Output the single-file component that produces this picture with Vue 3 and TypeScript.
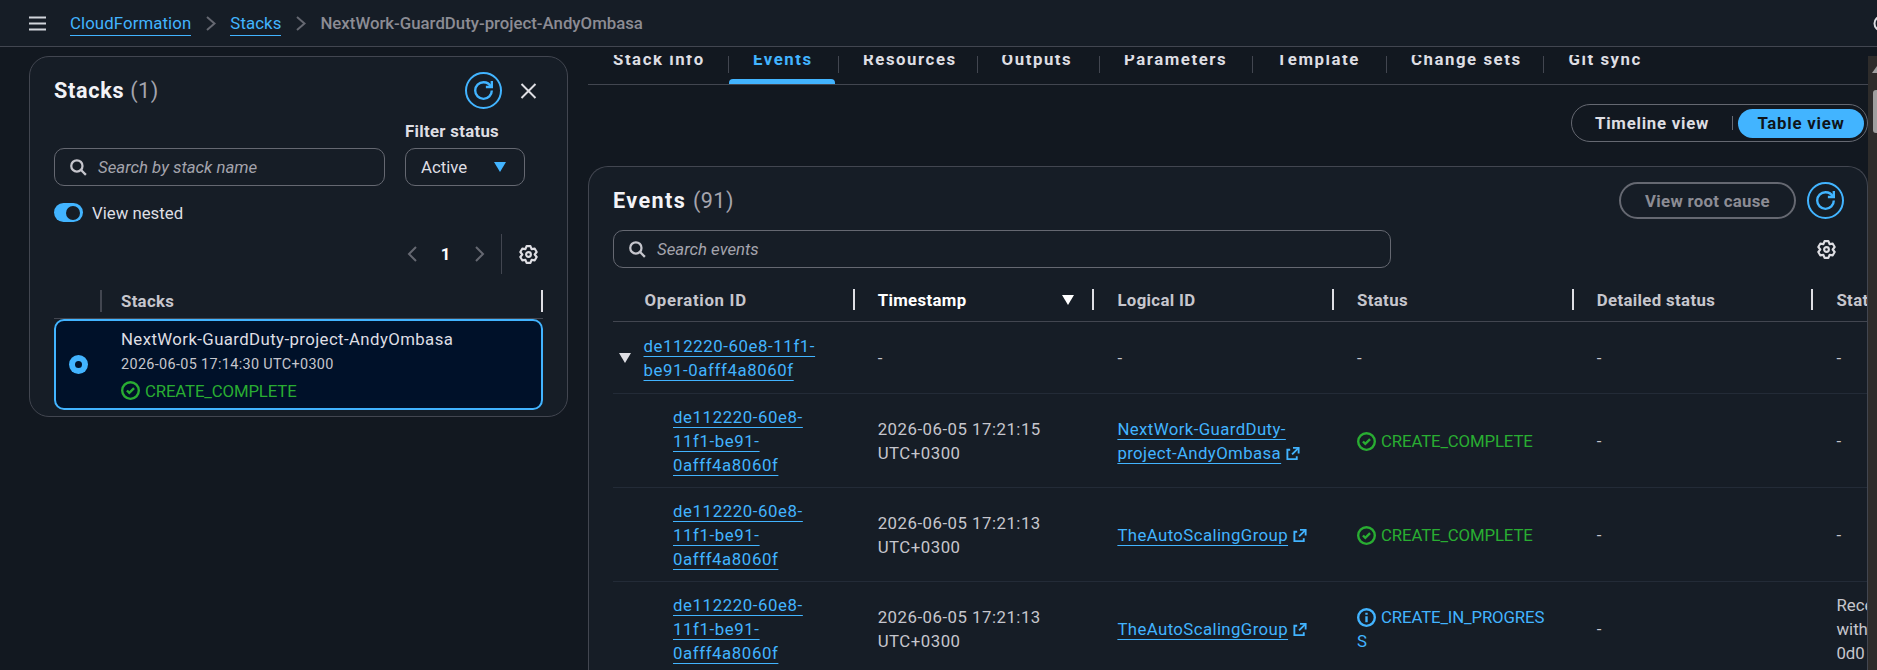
<template>
  <div class="page">
    <!-- Top bar -->
    <header class="topbar">
      <svg class="menu-icon" width="17" height="15" viewBox="0 0 17 15" fill="none" stroke="currentColor" stroke-width="2">
        <path d="M0 1.5h17M0 7.5h17M0 13.5h17" />
      </svg>
      <nav class="crumbs">
        <a class="crumb-link">CloudFormation</a>
        <svg class="crumb-sep" width="10" height="15" viewBox="0 0 10 15" fill="none" stroke="currentColor" stroke-width="2">
          <path d="M1 1l7.5 6.5L1 14" />
        </svg>
        <a class="crumb-link">Stacks</a>
        <svg class="crumb-sep" width="10" height="15" viewBox="0 0 10 15" fill="none" stroke="currentColor" stroke-width="2">
          <path d="M1 1l7.5 6.5L1 14" />
        </svg>
        <span class="crumb-current">NextWork-GuardDuty-project-AndyOmbasa</span>
      </nav>
      <svg class="corner-icon" width="17" height="17" viewBox="0 0 17 17" fill="none" stroke="currentColor" stroke-width="2">
        <circle cx="8.5" cy="8.5" r="7" />
      </svg>
    </header>

    <div class="main">
      <!-- Stacks side panel -->
      <aside class="side">
        <section class="card stacks-card">
          <div class="stacks-head">
            <h2 class="card-title">Stacks <span class="count">(1)</span></h2>
            <button class="round-btn">
              <svg width="19" height="19" viewBox="0 0 16 16" fill="none" stroke="currentColor" stroke-width="2">
                <path d="M10 5h5V0" />
                <path d="M15 8a6.99 6.99 0 0 1-7 7 6.99 6.99 0 0 1-7-7c0-3.87 3.13-7 7-7 2.79 0 5.2 1.63 6.33 4" />
              </svg>
            </button>
            <svg class="close-icon" width="17" height="16" viewBox="0 0 17 16" fill="none" stroke="currentColor" stroke-width="2">
              <path d="M1.5 1l14 14M15.5 1l-14 14" />
            </svg>
          </div>

          <div class="filters">
            <div class="search stack-search">
              <svg class="search-icon" width="18" height="18" viewBox="0 0 16 16" fill="none" stroke="currentColor" stroke-width="2">
                <circle cx="7" cy="7" r="5" />
                <path d="m15 15-4.5-4.5" />
              </svg>
              <span class="placeholder">Search by stack name</span>
            </div>
            <div class="filter-field">
              <label class="filter-label">Filter status</label>
              <div class="select">
                <span>Active</span>
                <span class="select-caret"></span>
              </div>
            </div>
          </div>

          <div class="nested">
            <span class="toggle"><span class="toggle-knob"></span></span>
            <span>View nested</span>
          </div>

          <div class="pager">
            <svg class="pager-arrow" width="10" height="16" viewBox="0 0 10 16" fill="none" stroke="currentColor" stroke-width="2">
              <path d="M9 1L2 8l7 7" />
            </svg>
            <span class="pager-num">1</span>
            <svg class="pager-arrow" width="10" height="16" viewBox="0 0 10 16" fill="none" stroke="currentColor" stroke-width="2">
              <path d="M1 1l7 7-7 7" />
            </svg>
            <span class="pager-divider"></span>
            <svg class="gear" width="19" height="19" viewBox="0 0 16 16" fill="none" stroke="currentColor" stroke-width="1.8" stroke-linejoin="round">
              <polygon :points="gearPoints" />
              <circle cx="8" cy="8" r="2" />
            </svg>
          </div>

          <div class="stacks-table-head">
            <span class="stacks-th">Stacks</span>
          </div>

          <div class="stack-row">
            <span class="radio"><span class="radio-dot"></span></span>
            <div class="stack-info">
              <div class="stack-name">NextWork-GuardDuty-project-AndyOmbasa</div>
              <div class="stack-date">2026-06-05 17:14:30 UTC+0300</div>
              <div class="stack-status">
                <svg class="status-icon" width="19" height="19" viewBox="0 0 16 16" fill="none" stroke="currentColor" stroke-width="2">
                  <circle cx="8" cy="8" r="7" />
                  <path d="m5 8 2 2 4-4" />
                </svg>
                CREATE_COMPLETE
              </div>
            </div>
          </div>
        </section>
      </aside>

      <!-- Stack detail -->
      <main class="content">
        <div class="tabs-clip">
          <div class="tabs">
            <div
              v-for="tab in tabs"
              :key="tab.label"
              class="tab"
              :class="{ active: tab.label === 'Events' }"
              :style="{ width: tab.width + 'px' }"
            >{{ tab.label }}</div>
          </div>
        </div>

        <div class="view-row">
          <div class="segmented">
            <span class="seg-item">Timeline view</span>
            <span class="seg-divider"></span>
            <span class="seg-item seg-active">Table view</span>
          </div>
        </div>

        <section class="card events-card">
          <div class="events-head">
            <h2 class="card-title events-title">Events <span class="count">(91)</span></h2>
            <button class="pill-btn">View root cause</button>
            <button class="round-btn">
              <svg width="19" height="19" viewBox="0 0 16 16" fill="none" stroke="currentColor" stroke-width="2">
                <path d="M10 5h5V0" />
                <path d="M15 8a6.99 6.99 0 0 1-7 7 6.99 6.99 0 0 1-7-7c0-3.87 3.13-7 7-7 2.79 0 5.2 1.63 6.33 4" />
              </svg>
            </button>
          </div>

          <div class="events-tools">
            <div class="search events-search">
              <svg class="search-icon" width="18" height="18" viewBox="0 0 16 16" fill="none" stroke="currentColor" stroke-width="2">
                <circle cx="7" cy="7" r="5" />
                <path d="m15 15-4.5-4.5" />
              </svg>
              <span class="placeholder">Search events</span>
            </div>
            <svg class="gear" width="19" height="19" viewBox="0 0 16 16" fill="none" stroke="currentColor" stroke-width="1.8" stroke-linejoin="round">
              <polygon :points="gearPoints" />
              <circle cx="8" cy="8" r="2" />
            </svg>
          </div>

          <div class="table">
            <div class="thead">
              <div class="th th-first">Operation ID</div>
              <div class="th th-sorted">
                Timestamp
                <span class="sort-caret"></span>
              </div>
              <div class="th">Logical ID</div>
              <div class="th">Status</div>
              <div class="th">Detailed status</div>
              <div class="th th-last">Status reason</div>
            </div>

            <div class="tr tr-parent">
              <div class="td td-op">
                <span class="expand-caret"></span>
                <a class="link op-link">de112220-60e8-11f1-be91-0afff4a8060f</a>
              </div>
              <div class="td">-</div>
              <div class="td">-</div>
              <div class="td">-</div>
              <div class="td">-</div>
              <div class="td">-</div>
            </div>

            <div v-for="row in rows" :key="row.id" class="tr">
              <div class="td td-child"><a class="link op-link">de112220-60e8-11f1-be91-0afff4a8060f</a></div>
              <div class="td td-time">{{ row.time }}</div>
              <div class="td">
                <a class="link">{{ row.logical }}</a>
                <svg class="external" width="16" height="15" viewBox="0 0 16 16" fill="none" stroke="currentColor" stroke-width="2">
                  <path d="M5 4H2v10h10v-3" />
                  <path d="M8 2h6v6" />
                  <path d="M14 2 7 9" />
                </svg>
              </div>
              <div class="td status" :class="row.info ? 'status-info' : 'status-ok'">
                <svg v-if="row.info" class="status-icon" width="19" height="19" viewBox="0 0 16 16" fill="none" stroke="currentColor" stroke-width="2">
                  <circle cx="8" cy="8" r="7" />
                  <path d="M8 7v5M8 4v1.6" />
                </svg>
                <svg v-else class="status-icon" width="19" height="19" viewBox="0 0 16 16" fill="none" stroke="currentColor" stroke-width="2">
                  <circle cx="8" cy="8" r="7" />
                  <path d="m5 8 2 2 4-4" />
                </svg>
                {{ row.status }}
              </div>
              <div class="td">-</div>
              <div class="td td-reason">{{ row.reason }}</div>
            </div>
          </div>
        </section>
      </main>

      <!-- Window scrollbar -->
      <div class="scrollbar">
        <span class="scroll-arrow"></span>
        <span class="scroll-thumb"></span>
      </div>
    </div>
  </div>
</template>

<script setup lang="ts">
interface EventRow {
  id: number;
  time: string;
  logical: string;
  status: string;
  info: boolean;
  reason: string;
}

const tabs: { label: string; width: number }[] = [
  { label: 'Stack info', width: 140 },
  { label: 'Events', width: 110 },
  { label: 'Resources', width: 138.6 },
  { label: 'Outputs', width: 122.4 },
  { label: 'Parameters', width: 152.6 },
  { label: 'Template', width: 134.4 },
  { label: 'Change sets', width: 157.5 },
  { label: 'Git sync', width: 96 },
];

const rows: EventRow[] = [
  {
    id: 1,
    time: '2026-06-05 17:21:15 UTC+0300',
    logical: 'NextWork-GuardDuty-project-AndyOmbasa',
    status: 'CREATE_COMPLETE',
    info: false,
    reason: '-',
  },
  {
    id: 2,
    time: '2026-06-05 17:21:13 UTC+0300',
    logical: 'TheAutoScalingGroup',
    status: 'CREATE_COMPLETE',
    info: false,
    reason: '-',
  },
  {
    id: 3,
    time: '2026-06-05 17:21:13 UTC+0300',
    logical: 'TheAutoScalingGroup',
    status: 'CREATE_IN_PROGRESS',
    info: true,
    reason: 'Received SUCCESS signal\nwith UniqueId i-\n0d0',
  },
];

// six toothed gear outline
const gearPoints = Array.from({ length: 6 }, (_, i) => {
  const a = i * 60 - 90;
  return [[a - 13, 7.2], [a + 13, 7.2], [a + 30, 5.2]]
    .map(([deg, r]) => {
      const rad = (deg * Math.PI) / 180;
      return `${(8 + r * Math.cos(rad)).toFixed(2)},${(8 + r * Math.sin(rad)).toFixed(2)}`;
    })
    .join(' ');
}).join(' ');
</script>

<style scoped>
.page {
  width: 1877px;
  height: 670px;
  overflow: hidden;
  display: flex;
  flex-direction: column;
  background: #121820;
  color: #c6c6cd;
  font-family: Roboto, "Liberation Sans", sans-serif;
  font-size: 16.8px;
  line-height: 24px;
}

/* Top bar */
.topbar {
  flex-shrink: 0;
  height: 46px;
  display: flex;
  align-items: center;
  padding-left: 29px;
  background: #161d26;
  border-bottom: 1px solid #424650;
  overflow: hidden;
}

.menu-icon {
  flex-shrink: 0;
  color: #d1d5db;
  margin-right: 24px;
}

.crumbs {
  flex: 1;
  display: flex;
  align-items: center;
  gap: 14.5px;
}

.crumb-link {
  color: #42b4ff;
  border-bottom: 1px solid #42b4ff;
  line-height: 23px;
  margin-top: 1px;
  letter-spacing: 0.1px;
}

.crumb-sep {
  color: #656871;
}

.crumb-current {
  color: #8c8c94;
  font-weight: 500;
}

.corner-icon {
  flex-shrink: 0;
  color: #dedee3;
  margin-right: -13px;
}

/* Layout */
.main {
  flex: 1;
  min-height: 0;
  display: flex;
}

.side {
  flex-shrink: 0;
  box-sizing: border-box;
  width: 588px;
  padding: 9px 20px 0 29px;
}

.content {
  flex: 1;
  min-width: 0;
  display: flex;
  flex-direction: column;
}

.card {
  background: #161d26;
  border: 1px solid #424650;
  border-radius: 20px;
}

.card-title {
  margin: 0;
  font-size: 21.6px;
  line-height: 28px;
  font-weight: 700;
  color: #f3f3f7;
  letter-spacing: 0.7px;
}

.events-title {
  letter-spacing: 1.4px;
}

.count {
  font-weight: 400;
  color: #a4a4ad;
  letter-spacing: 0.4px;
}

.round-btn {
  flex-shrink: 0;
  width: 37px;
  height: 37px;
  display: flex;
  align-items: center;
  justify-content: center;
  padding: 0;
  background: transparent;
  border: 2px solid #42b4ff;
  border-radius: 50%;
  color: #42b4ff;
}

/* Stacks panel */
.stacks-card {
  box-sizing: border-box;
  height: 361px;
  padding: 15px 24px 0 24px;
}

.stacks-head {
  display: flex;
  align-items: center;
}

.stacks-head .card-title {
  flex: 1;
}

.close-icon {
  color: #dedee3;
  margin: 0 6px 0 18px;
}

.filters {
  display: flex;
  align-items: flex-end;
  gap: 20px;
  margin-top: 12px;
}

.search {
  display: flex;
  align-items: center;
  gap: 11px;
  height: 38px;
  box-sizing: border-box;
  padding-left: 14px;
  border: 1px solid #656871;
  border-radius: 10px;
}

.stack-search {
  width: 331px;
}

.search-icon {
  flex-shrink: 0;
  color: #c6c6cd;
}

.placeholder {
  font-style: italic;
  color: #a4a4ad;
}

.filter-field {
  width: 120px;
}

.filter-label {
  display: block;
  font-weight: 700;
  color: #dedee3;
  line-height: 20px;
  margin-bottom: 7px;
  letter-spacing: 0.3px;
}

.select {
  display: flex;
  align-items: center;
  justify-content: space-between;
  height: 38px;
  box-sizing: border-box;
  padding: 0 18px 0 15px;
  border: 1px solid #656871;
  border-radius: 10px;
  color: #dedee3;
}

.select-caret {
  width: 0;
  height: 0;
  border-left: 6px solid transparent;
  border-right: 6px solid transparent;
  border-top: 10px solid #42b4ff;
}

.nested {
  display: flex;
  align-items: center;
  gap: 9px;
  height: 19px;
  margin-top: 17px;
  color: #dedee3;
}

.toggle {
  width: 29px;
  height: 19px;
  display: flex;
  align-items: center;
  justify-content: flex-end;
  padding-right: 3px;
  box-sizing: border-box;
  background: #42b4ff;
  border-radius: 10px;
}

.toggle-knob {
  width: 14px;
  height: 14px;
  border-radius: 50%;
  background: #161d26;
}

.pager {
  display: flex;
  align-items: center;
  justify-content: flex-end;
  height: 40px;
  margin-top: 12px;
  padding-right: 5.5px;
}

.pager-arrow {
  color: #656871;
}

.pager-num {
  width: 58px;
  text-align: center;
  font-weight: 700;
  color: #fff;
}

.pager-divider {
  width: 1px;
  height: 40px;
  background: #424650;
  margin: 0 17px 0 16px;
}

.gear {
  flex-shrink: 0;
  color: #dedee3;
}

.stacks-table-head {
  display: flex;
  height: 28px;
  margin-top: 16px;
  padding-left: 46px;
  border-bottom: 1px solid #424650;
  box-sizing: content-box;
}

.stacks-th {
  flex: 1;
  height: 22px;
  line-height: 22px;
  padding-left: 19px;
  font-weight: 700;
  border-left: 2px solid #424650;
  border-right: 2px solid #dedee3;
  letter-spacing: 0.3px;
}

.stack-row {
  display: flex;
  align-items: center;
  gap: 33px;
  height: 91px;
  box-sizing: border-box;
  padding-left: 13px;
  background: #001129;
  border: 2px solid #42b4ff;
  border-radius: 10px;
}

.radio {
  flex-shrink: 0;
  width: 19px;
  height: 19px;
  display: flex;
  align-items: center;
  justify-content: center;
  background: #42b4ff;
  border-radius: 50%;
}

.radio-dot {
  width: 7px;
  height: 7px;
  border-radius: 50%;
  background: #001129;
}

.stack-info {
  line-height: 26px;
}

.stack-name {
  color: #dedee3;
  letter-spacing: 0.4px;
}

.stack-date {
  font-size: 14.4px;
  color: #c6c6cd;
  letter-spacing: 0.35px;
}

.stack-status {
  display: flex;
  align-items: center;
  gap: 5px;
  color: #29ad32;
  letter-spacing: -0.15px;
}

.status-icon {
  flex-shrink: 0;
  vertical-align: -4px;
  margin-right: 1px;
}

.stack-status .status-icon {
  margin-right: 0;
}

/* Tabs */
.tabs-clip {
  flex-shrink: 0;
  height: 29px;
  margin-top: 8px;
  overflow: hidden;
  border-bottom: 1px solid #424650;
}

.tabs {
  display: flex;
  margin-top: -8.5px;
}

.tab {
  position: relative;
  flex-shrink: 0;
  box-sizing: border-box;
  height: 37.5px;
  padding-left: 25px;
  font-weight: 700;
  color: #dedee3;
  letter-spacing: 1.55px;
  white-space: nowrap;
}

.tab::before {
  content: "";
  position: absolute;
  left: 0;
  top: 9.5px;
  width: 1px;
  height: 17px;
  background: #424650;
}

.tab:first-child::before {
  display: none;
}

.tab.active {
  color: #42b4ff;
}

.tab.active::after {
  content: "";
  position: absolute;
  left: 1px;
  right: 3px;
  bottom: 0;
  height: 5px;
  background: #42b4ff;
  border-radius: 4px 4px 0 0;
}

.view-row {
  flex-shrink: 0;
  display: flex;
  justify-content: flex-end;
  margin-top: 19px;
}

.segmented {
  display: flex;
  align-items: center;
  width: 297px;
  height: 38px;
  box-sizing: border-box;
  padding: 0 3px 0 23px;
  border: 1px solid #656871;
  border-radius: 19px;
  font-weight: 700;
  color: #dedee3;
  letter-spacing: 0.75px;
}

.seg-divider {
  width: 1px;
  height: 14px;
  background: #656871;
  margin: 0 5px 0 auto;
}

.seg-active {
  flex-shrink: 0;
  width: 126px;
  height: 29px;
  line-height: 29px;
  text-align: center;
  background: #42b4ff;
  color: #0f141a;
  border-radius: 15px;
}

/* Events card */
.events-card {
  flex: 1;
  min-height: 0;
  margin-top: 24px;
  padding: 15px 0 0 24px;
  overflow: hidden;
  border-bottom: none;
  border-radius: 20px 20px 0 0;
}

.events-head {
  display: flex;
  align-items: center;
  gap: 11px;
  padding-right: 23px;
}

.events-head .card-title {
  flex: 1;
}

.pill-btn {
  width: 177px;
  height: 37px;
  padding: 0;
  background: transparent;
  border: 2px solid #656871;
  border-radius: 19px;
  color: #8c8c94;
  font: inherit;
  font-weight: 700;
  letter-spacing: 0.3px;
}

.events-tools {
  display: flex;
  align-items: center;
  justify-content: space-between;
  margin-top: 11px;
  padding-right: 31px;
}

.events-search {
  width: 778px;
}

/* Events table */
.thead {
  display: grid;
  grid-template-columns: repeat(6, 239.7px);
  align-items: start;
  height: 54px;
  box-sizing: border-box;
  padding-top: 21px;
  border-bottom: 1px solid #424650;
  font-weight: 700;
}

.th {
  position: relative;
  display: flex;
  align-items: center;
  justify-content: space-between;
  height: 21px;
  padding: 0 18px 0 25px;
  white-space: nowrap;
  letter-spacing: 0.35px;
}

.th::before {
  content: "";
  position: absolute;
  left: 0;
  top: 0;
  width: 2px;
  height: 21px;
  background: #dedee3;
}

.th-first {
  padding-left: 31.5px;
  letter-spacing: 0.7px;
}

.th-first::before {
  display: none;
}

.th-sorted {
  color: #fff;
}

.sort-caret {
  width: 0;
  height: 0;
  border-left: 6.5px solid transparent;
  border-right: 6.5px solid transparent;
  border-top: 10px solid #fff;
}

.tr {
  display: grid;
  grid-template-columns: repeat(6, 239.7px);
  align-items: center;
  height: 94px;
  box-sizing: border-box;
  border-bottom: 1px solid #232b37;
}

.tr-parent {
  height: 72px;
}

.td {
  padding: 0 24px 0 25px;
}

.td-op {
  display: flex;
  align-items: center;
  gap: 13px;
  padding-left: 5.5px;
}

.td-child {
  padding-left: 60px;
}

.td-time {
  letter-spacing: 0.5px;
}

.td-reason {
  white-space: pre;
}

.expand-caret {
  flex-shrink: 0;
  width: 0;
  height: 0;
  border-left: 6.5px solid transparent;
  border-right: 6.5px solid transparent;
  border-top: 10px solid #dedee3;
}

.link {
  color: #42b4ff;
  text-decoration: underline;
  text-underline-offset: 4px;
  text-decoration-thickness: 1px;
  letter-spacing: 0.4px;
}

.op-link {
  letter-spacing: 0.6px;
}

.external {
  color: #42b4ff;
  margin-left: 4px;
  vertical-align: -2px;
}

.status {
  word-break: break-all;
  padding-right: 20px;
  letter-spacing: -0.15px;
}

.status-ok {
  color: #29ad32;
}

.status-info {
  color: #42b4ff;
}

/* Scrollbar */
.scrollbar {
  flex-shrink: 0;
  width: 9px;
  margin-top: 9px;
  display: flex;
  flex-direction: column;
  align-items: flex-end;
  background: #2e2c2b;
}

.scroll-arrow {
  align-self: flex-start;
  margin: 10px 0 0 4px;
  width: 0;
  height: 0;
  border-left: 5px solid transparent;
  border-right: 5px solid transparent;
  border-bottom: 7px solid #9f9f9f;
}

.scroll-thumb {
  width: 4px;
  height: 43px;
  margin-top: 17px;
  background: #9f9f9f;
  border-radius: 3px 0 0 3px;
}
</style>

<style>
html,
body {
  margin: 0;
  overflow: hidden;
  background: #121820;
}
</style>
